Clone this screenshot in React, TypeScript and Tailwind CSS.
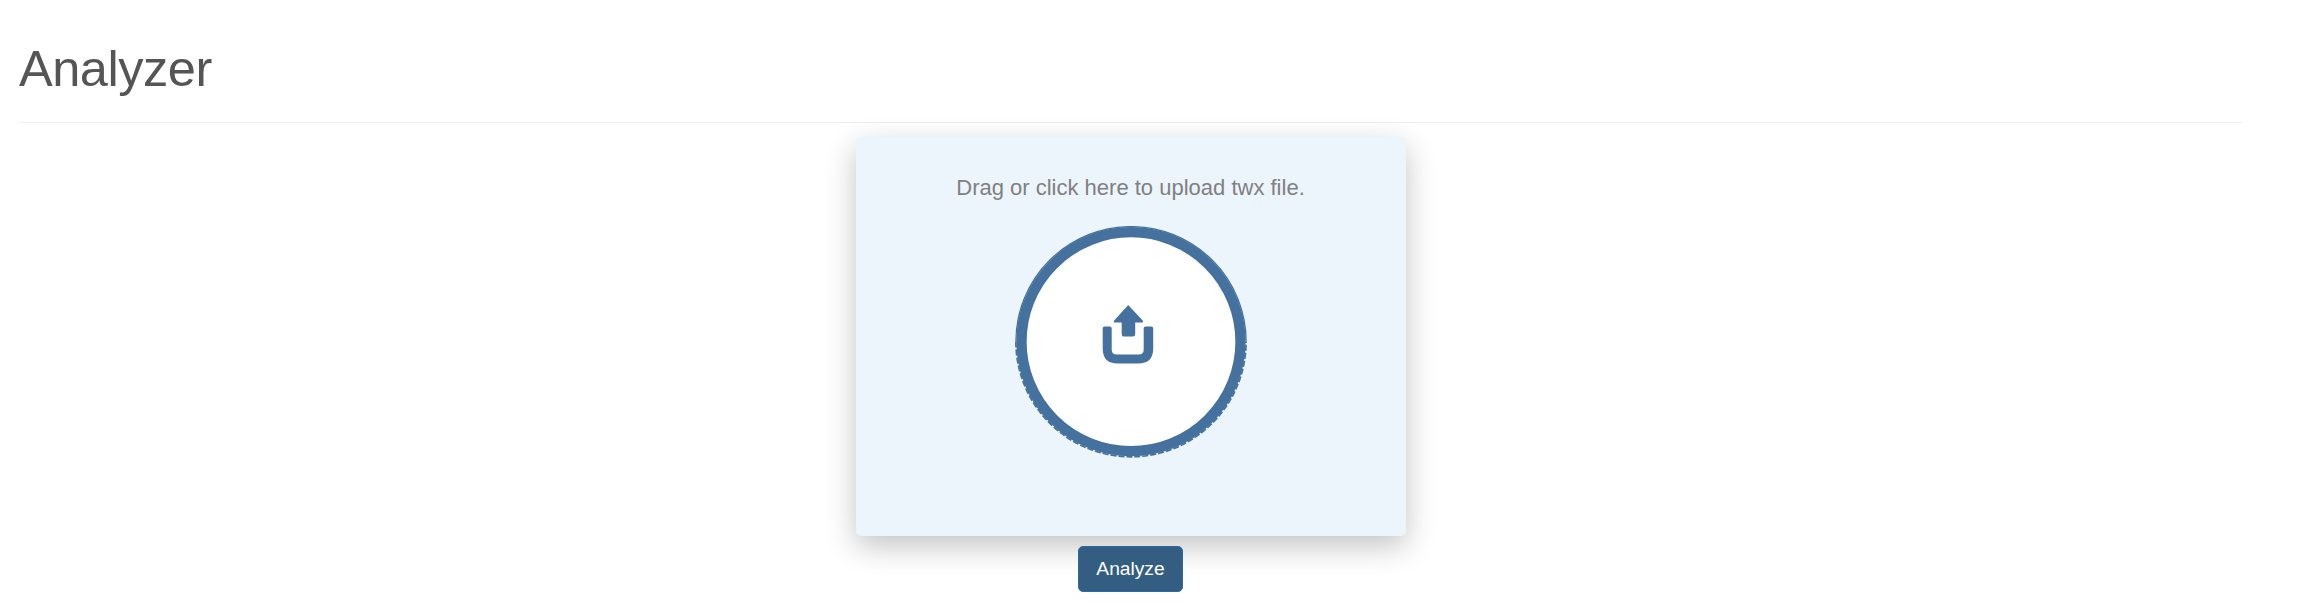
export default function App() {
  return (
    <main className="h-[610px] overflow-hidden bg-white pl-[19px] pr-[72px] font-['Liberation_Sans',Arial,sans-serif]">
      <h1 className="h-[123px] border-b-[1px] border-[#eeeeee] pt-[41px] text-[50.5px] leading-[55px] tracking-[-0.45px] text-[#555555]">
        Analyzer
      </h1>
      <form className="flex flex-col items-center pt-[14px]">
        <label className="flex h-[399px] w-[550px] flex-col items-center rounded-[5px] bg-[#edf5fc] pt-[36px] shadow-[0_10px_30px_0_rgba(0,0,0,0.24)]">
          <span className="h-[53px] text-[22px] leading-[30px] text-[#808080]">
            Drag or click here to upload twx file.
          </span>
          <svg className="h-[232px] w-[232px]" viewBox="0 0 232 232" fill="none">
            <circle cx="116" cy="115.700" r="109.500" fill="#fff" stroke="#44719e" strokeWidth="10.300" />
            <path d="M0.900 115.700 A115.100 115.100 0 0 1 231.100 115.700" stroke="#44719e" strokeWidth="1.300" />
            <path d="M0.900 115.700 A115.100 115.100 0 0 0 231.100 115.700" stroke="#44719e" strokeWidth="1.700" strokeDasharray="6 2" />
            <g fill="#44719e" transform="translate(.7 -.5)">
              <path d="M112.5 79.5 L127 95 Q128 97 126 97 H119.5 V108.500 Q119.500 111 117 111 H108 Q106 111 106 108.500 V97 H99.500 Q97 97 98.500 95 Z" />
              <path d="M89 101 H94 Q96 101 96 103 V124 Q96 129 101 129 H123 Q128 129 128 124 V103 Q128 101 130 101 H135.500 Q137.500 101 137.500 103 V123 Q137.500 138 122.500 138 H102 Q87 138 87 123 V103 Q87 101 89 101 Z" />
            </g>
          </svg>
        </label>
        <button className="mt-[10px] h-[46px] w-[105px] rounded-[5px] border border-[#286ba6] bg-[#335e82] text-[19.2px] leading-[24px] text-white">
          Analyze
        </button>
      </form>
    </main>
  );
}
